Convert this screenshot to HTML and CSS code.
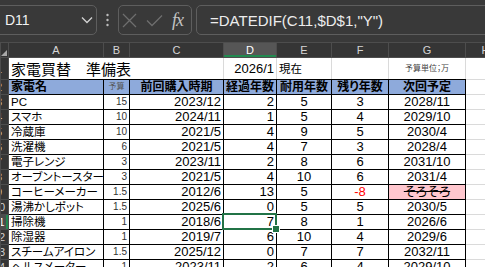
FILE: index.html
```html
<!DOCTYPE html>
<html lang="ja">
<head>
    <meta charset="UTF-8">
    <meta name="viewport" content="width=device-width, initial-scale=1.0">
    <title>家電買替 準備表</title>
    <link rel="stylesheet" href="styles.css">
</head>
<body>

<!-- 数式バー -->
<div class="formula-bar">
    <div class="name-box">
        <span>D11</span>
        <svg class="chevron" width="12" height="8" viewBox="0 0 12 8"><polyline points="1,1.5 6,6.5 11,1.5" fill="none" stroke="#d0d0d0" stroke-width="1.4"/></svg>
    </div>
    <div class="grip">
        <svg width="3" height="14" viewBox="0 0 3 14"><circle cx="1.5" cy="2" r="1.2" fill="#bdbdbd"/><circle cx="1.5" cy="7" r="1.2" fill="#bdbdbd"/><circle cx="1.5" cy="12" r="1.2" fill="#bdbdbd"/></svg>
    </div>
    <div class="fx-box">
        <svg width="15" height="15" viewBox="0 0 15 15"><path d="M1 1 L14 14 M14 1 L1 14" stroke="#6e6e6e" stroke-width="1.3" fill="none"/></svg>
        <svg width="17" height="13" viewBox="0 0 17 13"><polyline points="1,6.5 6,11.5 16,1.5" stroke="#6e6e6e" stroke-width="1.3" fill="none"/></svg>
        <span class="fx">fx</span>
    </div>
    <div class="formula">=DATEDIF(C11,$D$1,"Y")</div>
</div>

<!-- シート -->
<table class="sheet">
    <colgroup>
        <col class="c-rh"><col class="c-a"><col class="c-b"><col class="c-c"><col class="c-d"><col class="c-e"><col class="c-f"><col class="c-g"><col class="c-h">
    </colgroup>
    <thead>
        <tr>
            <th class="corner"><svg width="6" height="6" viewBox="0 0 6 6"><polygon points="6,0 6,6 0,6" fill="#a8a8a8"/></svg></th>
            <th>A</th><th>B</th><th>C</th><th class="sel">D</th><th>E</th><th>F</th><th>G</th><th>H</th>
        </tr>
    </thead>
    <tbody id="sheet-body">
        <tr class="r-title">
            <th class="rh"><span>1</span></th>
            <td colspan="3" class="title">家電買替　準備表</td>
            <td class="num">2026/1</td>
            <td class="name">現在</td>
            <td></td>
            <td class="unit">予算単位；万</td>
            <td class="out"></td>
        </tr>
        <tr class="r-head">
            <th class="rh"><span>2</span></th>
            <td class="name">家電名</td>
            <td class="budget-h">予算</td>
            <td>前回購入時期</td>
            <td>経過年数</td>
            <td>耐用年数</td>
            <td>残り年数</td>
            <td>次回予定</td>
            <td class="out"></td>
        </tr>
    </tbody>
</table>

<script>
// 家電名, 予算, 前回購入, 経過, 耐用, 残り, 次回
const items = [
    ['PC', 15, '2023/12', 2, 5, 3, '2028/11'],
    ['スマホ', 10, '2024/11', 1, 5, 4, '2029/10'],
    ['冷蔵庫', 10, '2021/5', 4, 9, 5, '2030/4'],
    ['洗濯機', 6, '2021/5', 4, 7, 3, '2028/4'],
    ['電子レンジ', 3, '2023/11', 2, 8, 6, '2031/10'],
    ['オーブントースター', 3, '2021/5', 4, 10, 6, '2031/4'],
    ['コーヒーメーカー', 1.5, '2012/6', 13, 5, -8, 'そろそろ'],
    ['湯沸かしポット', 1.5, '2025/6', 0, 5, 5, '2030/5'],
    ['掃除機', 1, '2018/6', 7, 8, 1, '2026/6'],
    ['除湿器', 1, '2019/7', 6, 10, 4, '2029/6'],
    ['スチームアイロン', 1.5, '2025/12', 0, 7, 7, '2032/11'],
    ['ヘルスメーター', 1, '2023/11', 2, 6, 4, '2029/10']
];

const sheetBody = document.getElementById('sheet-body');

items.forEach((item, i) => {
    const rowNo = i + 3;
    const active = rowNo === 11;
    const late = item[5] < 0;
    const row = document.createElement('tr');
    row.innerHTML = `<th class="rh${active ? ' sel' : ''}"><span>${rowNo}</span></th>`
        + `<td class="name">${item[0]}</td>`
        + `<td class="budget">${item[1]}</td>`
        + `<td class="num">${item[2]}</td>`
        + `<td class="num${active ? ' active' : ''}">${item[3]}</td>`
        + `<td class="mid">${item[4]}</td>`
        + `<td class="mid${late ? ' late' : ''}">${item[5]}</td>`
        + `<td class="mid${late ? ' soon' : ''}">${item[6]}</td>`
        + `<td class="out"></td>`;
    sheetBody.appendChild(row);
});
</script>

</body>
</html>
```

FILE: styles.css
```css
* {
    margin: 0;
    padding: 0;
    box-sizing: border-box;
}

body {
    width: 485px;
    height: 267px;
    overflow: hidden;
    background-color: #393939;
    font-family: "Liberation Sans", "Noto Sans CJK JP", sans-serif;
}

/* 数式バー */
.formula-bar {
    display: flex;
    align-items: center;
    height: 42px;
    padding-bottom: 2px;
}

.name-box,
.fx-box,
.formula {
    height: 30px;
    border: 1px solid #5e5e5e;
    border-radius: 5px;
}

.name-box {
    display: flex;
    align-items: center;
    justify-content: space-between;
    width: 107px;
    margin-left: -10px;
    padding: 0 3px 0 14px;
    color: #f2f2f2;
    font-size: 14px;
}

.grip {
    display: flex;
    justify-content: center;
    width: 21px;
}

.fx-box {
    display: flex;
    align-items: center;
    gap: 9px;
    width: 74px;
    padding-left: 3px;
}

.fx {
    font-family: "Liberation Serif", serif;
    font-style: italic;
    font-size: 18px;
    color: #c4c4c4;
    letter-spacing: -1px;
}

.formula {
    flex: 1;
    display: flex;
    align-items: center;
    margin-left: 4px;
    margin-right: -10px;
    padding-left: 13px;
    color: #ededed;
    font-size: 15px;
}

/* シート */
.sheet {
    width: 505px;
    border-collapse: collapse;
    table-layout: fixed;
    background-color: #fff;
}

.c-rh { width: 8px; }
.c-a { width: 95px; }
.c-b { width: 26px; }
.c-c { width: 94px; }
.c-d { width: 53px; }
.c-e { width: 55px; }
.c-f { width: 57px; }
.c-g { width: 77px; }
.c-h { width: 40px; }

.sheet thead th {
    height: 15px;
    background-color: #353535;
    border: 1px solid #4d4d4d;
    color: #d6d6d6;
    font-size: 11px;
    font-weight: normal;
    line-height: 13px;
}

.sheet thead th.sel {
    background-color: #565656;
    color: #fff;
    box-shadow: inset 0 -2px 0 #21894f;
}

.sheet thead th.corner {
    text-align: right;
    vertical-align: bottom;
    line-height: 0;
    padding: 0 1px 1px 0;
}

.sheet tr {
    height: 15px;
}

.sheet .r-title {
    height: 22px;
}

.rh {
    overflow: hidden;
    background-color: #353535;
    border: 1px solid #4d4d4d;
    color: #d0d0d0;
    font-size: 11px;
    font-weight: normal;
}

.rh span {
    display: block;
    width: 20px;
    margin-left: -12px;
    text-align: center;
}

.rh.sel {
    background-color: #4c4c4c;
    color: #fff;
    box-shadow: inset -2px 0 0 #21894f;
}

.sheet td {
    padding: 0 2px;
    border: 1px solid #000;
    color: #000;
    font-size: 13px;
    line-height: 14px;
    white-space: nowrap;
    overflow: hidden;
    vertical-align: bottom;
    font-feature-settings: "palt";
}

.sheet td.out {
    border-color: #dadada;
}

/* 1行目 */
.r-title td {
    border-color: #dadada;
    border-bottom-color: #000;
    vertical-align: middle;
}

.r-title td.out {
    border-bottom-color: #dadada;
}

.sheet td.title {
    font-size: 15px;
    line-height: 18px;
    padding-top: 3px;
    font-feature-settings: normal;
}

.sheet td.unit {
    text-align: center;
    font-size: 8px;
    color: #444;
}

/* 見出し行 */
.r-head td {
    background-color: #8eaadb;
    font-size: 12px;
    font-weight: bold;
    text-align: center;
}

.sheet .r-head td.name {
    font-size: 12px;
    text-align: left;
}

.sheet .r-head td.budget-h {
    font-size: 8px;
    font-weight: normal;
    color: #555;
}

.sheet .r-head td.out {
    background-color: #fff;
}

/* データ */
.sheet td.name {
    font-size: 11.5px;
}

.sheet td.budget {
    text-align: right;
    font-size: 10px;
    color: #333;
}

.num {
    text-align: right;
}

.mid {
    text-align: center;
}

.sheet td.late {
    color: #ff0000;
}

.sheet td.soon {
    background-color: #ffc7ce;
    text-decoration: line-through;
}

/* 選択セル */
.sheet td.active {
    position: relative;
    overflow: visible;
}

.sheet td.active::before {
    content: "";
    position: absolute;
    top: -2px;
    left: -2px;
    right: -1px;
    bottom: -1px;
    border: 2px solid #217346;
}

.sheet td.active::after {
    content: "";
    position: absolute;
    right: -4px;
    bottom: -4px;
    width: 6px;
    height: 6px;
    background-color: #217346;
    border: 1px solid #fff;
}
```
